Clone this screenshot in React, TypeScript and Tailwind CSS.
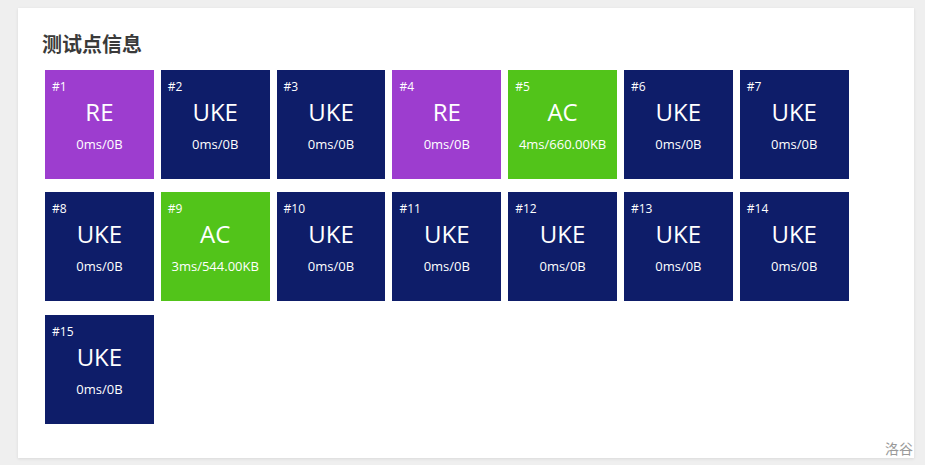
import React from 'react'

type Case = { id: number; status: 'AC' | 'RE' | 'UKE'; info: string }

const cases: Case[] = [
  { id: 1, status: 'RE', info: '0ms/0B' },
  { id: 2, status: 'UKE', info: '0ms/0B' },
  { id: 3, status: 'UKE', info: '0ms/0B' },
  { id: 4, status: 'RE', info: '0ms/0B' },
  { id: 5, status: 'AC', info: '4ms/660.00KB' },
  { id: 6, status: 'UKE', info: '0ms/0B' },
  { id: 7, status: 'UKE', info: '0ms/0B' },
  { id: 8, status: 'UKE', info: '0ms/0B' },
  { id: 9, status: 'AC', info: '3ms/544.00KB' },
  { id: 10, status: 'UKE', info: '0ms/0B' },
  { id: 11, status: 'UKE', info: '0ms/0B' },
  { id: 12, status: 'UKE', info: '0ms/0B' },
  { id: 13, status: 'UKE', info: '0ms/0B' },
  { id: 14, status: 'UKE', info: '0ms/0B' },
  { id: 15, status: 'UKE', info: '0ms/0B' },
]

const colors = {
  AC: 'bg-[#52c41a]',
  RE: 'bg-[#9d3dcf]',
  UKE: 'bg-[#0e1d69]',
}

function Tile({ c }: { c: Case }) {
  return (
    <div className={`w-[108.8px] h-[108.8px] ${colors[c.status]} text-white flex flex-col pt-[9px] px-[7px]`}>
      <div className="text-[12px] leading-[16px]">#{c.id}</div>
      <div className="text-[24px] leading-[32px] mt-[1px] text-center">{c.status}</div>
      <div className="text-[13px] leading-[20px] mt-[6px] text-center whitespace-nowrap">{c.info}</div>
    </div>
  )
}

export default function App() {
  return (
    <div
      className="relative w-[925px] h-[465px] bg-[#efefef] pt-[8px] pl-[18px]"
      style={{ fontFamily: '"Open Sans", "Noto Sans CJK SC", sans-serif' }}
    >
      <div className="w-[896px] h-[450px] bg-white shadow-[0_1px_3px_rgba(26,26,26,0.1)] px-[24px] pt-[20px]">
        <h3 className="text-[20px] leading-[34px] font-bold text-[#3a3a3a]">测试点信息</h3>
        <div className="mt-[8px] pl-[3px] flex flex-wrap gap-x-[7px] gap-y-[13.7px]">
          {cases.map((c) => (
            <Tile key={c.id} c={c} />
          ))}
        </div>
      </div>
      <div className="absolute right-[12px] bottom-[6px] text-[14px] leading-[20px] text-[#999]">洛谷</div>
    </div>
  )
}
